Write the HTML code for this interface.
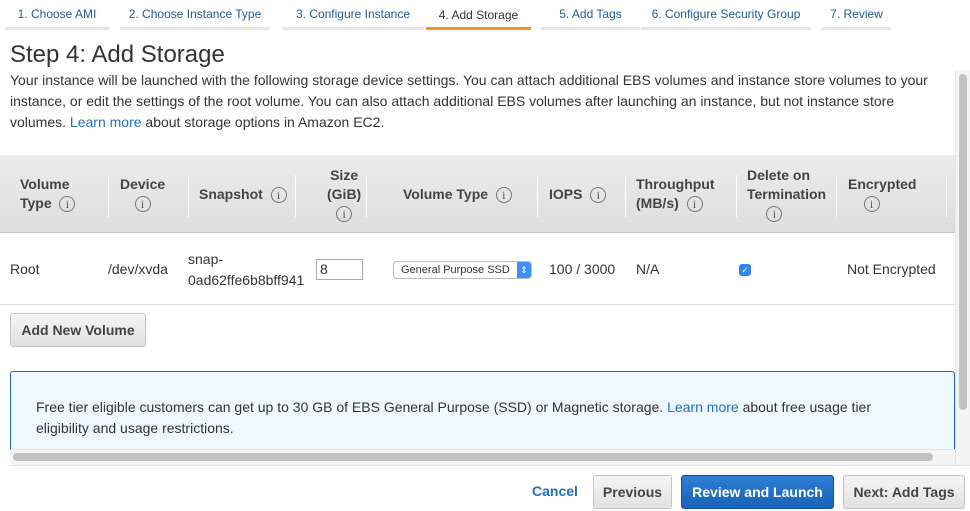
<!DOCTYPE html>
<html><head><style>
*{box-sizing:border-box;margin:0;padding:0}
body{width:970px;height:511px;overflow:hidden;background:#fff;font-family:"Liberation Sans",Arial,sans-serif;color:#333;position:relative}
.tab{position:absolute;top:0;height:30px;font-size:12px;color:#1f5b98;text-align:center;line-height:28px;border-bottom:3px solid #e5e5e5}
.tab.act{color:#333;border-bottom-color:#f7941d;line-height:30px}
h1{position:absolute;left:10px;top:41px;font-size:24px;font-weight:normal;color:#333}
.intro{position:absolute;left:10px;top:70px;width:935px;font-size:14px;line-height:21px}
a{color:#1f6fc5;text-decoration:none}
.thead{position:absolute;left:0;top:155px;width:955px;height:78px;background:linear-gradient(#ebebeb,#dedede);border-bottom:1px solid #c8c8c8}
.th{position:absolute;top:0;height:78px;display:flex;align-items:center;font-weight:bold;font-size:14px;line-height:19px;color:#444}
.th>div{white-space:nowrap}
.sep{position:absolute;top:20px;height:42px;border-left:1px solid #fff}
.i{display:inline-block;width:16px;height:16px;border:1px solid #777;border-radius:50%;font:12px/14px "Liberation Serif",serif;text-align:center;color:#555;font-weight:normal;vertical-align:middle}
.row{position:absolute;left:0;top:234px;width:955px;height:71px;border-bottom:1px solid #ddd;font-size:14px}
.td{position:absolute;top:0;height:71px;display:flex;align-items:center;line-height:21px}
.btn{position:absolute;height:34px;border:1px solid #c4c4c4;border-radius:3px;background:linear-gradient(#f5f5f5,#e1e1e1);font-weight:bold;font-size:14px;color:#444;text-align:center;line-height:32px}
</style></head><body>
<div class="tab" style="left:5px;width:104px">1. Choose AMI</div>
<div class="tab" style="left:120px;width:150px">2. Choose Instance Type</div>
<div class="tab" style="left:282px;width:142px">3. Configure Instance</div>
<div class="tab act" style="left:426px;width:105px">4. Add Storage</div>
<div class="tab" style="left:541px;width:99px">5. Add Tags</div>
<div class="tab" style="left:641px;width:170px">6. Configure Security Group</div>
<div class="tab" style="left:822px;width:69px">7. Review</div>
<h1>Step 4: Add Storage</h1>
<div class="intro">Your instance will be launched with the following storage device settings. You can attach additional EBS volumes and instance store volumes to your instance, or edit the settings of the root volume. You can also attach additional EBS volumes after launching an instance, but not instance store volumes. <a>Learn more</a> about storage options in Amazon EC2.</div>
<div class="thead">
<div class="th" style="left:20px"><div>Volume<br>Type &nbsp;<span class="i">i</span></div></div>
<div class="sep" style="left:108px"></div>
<div class="th" style="left:120px"><div style="text-align:center">Device<br><span class="i">i</span></div></div>
<div class="sep" style="left:188px"></div>
<div class="th" style="left:199px"><div>Snapshot &nbsp;<span class="i">i</span></div></div>
<div class="sep" style="left:295px"></div>
<div class="th" style="left:327px"><div style="text-align:center">Size<br>(GiB)<br><span class="i">i</span></div></div>
<div class="sep" style="left:366px"></div>
<div class="th" style="left:403px"><div>Volume Type &nbsp;<span class="i">i</span></div></div>
<div class="sep" style="left:537px"></div>
<div class="th" style="left:549px"><div>IOPS &nbsp;<span class="i">i</span></div></div>
<div class="sep" style="left:625px"></div>
<div class="th" style="left:636px"><div>Throughput<br>(MB/s) &nbsp;<span class="i">i</span></div></div>
<div class="sep" style="left:736px"></div>
<div class="th" style="left:747px"><div>Delete on<br>Termination<br>&nbsp;&nbsp;&nbsp;&nbsp;&nbsp;<span class="i">i</span></div></div>
<div class="sep" style="left:836px"></div>
<div class="th" style="left:848px"><div>Encrypted<br>&nbsp;&nbsp;&nbsp;&nbsp;<span class="i">i</span></div></div>
<div class="sep" style="left:946px"></div>
</div>
<div class="row">
<div class="td" style="left:10px">Root</div>
<div class="td" style="left:108px">/dev/xvda</div>
<div class="td" style="left:188px">snap-<br>0ad62ffe6b8bff941</div>
<div class="td" style="left:316px"><div style="width:47px;height:21px;border:1px solid #aaa;padding-left:3px;line-height:19px">8</div></div>
<div class="td" style="left:393px"><div style="width:139px;height:18px;border:1px solid #bbb;border-radius:4px;font-size:11px;line-height:16px;padding-left:7px;position:relative;overflow:hidden;white-space:nowrap">General Purpose SSD<span style="position:absolute;right:0;top:0;width:14px;height:16px;background:#3d8ff5;color:#fff;font-size:9px;text-align:center;line-height:16px">&#8661;</span></div></div>
<div class="td" style="left:549px">100 / 3000</div>
<div class="td" style="left:636px">N/A</div>
<div class="td" style="left:739px"><div style="width:12px;height:12px;border-radius:3px;background:#2f86f0;color:#fff;font-size:9px;line-height:12px;text-align:center">&#10003;</div></div>
<div class="td" style="left:847px">Not Encrypted</div>
</div>
<div class="btn" style="left:10px;top:313px;width:136px">Add New Volume</div>
<div style="position:absolute;left:10px;top:371px;width:945px;height:90px;background:#eef8fe;border:1px solid #1f67b5;border-bottom:none;border-radius:3px 3px 0 0;font-size:14px;line-height:21px;padding:25px 50px 0 25px">Free tier eligible customers can get up to 30 GB of EBS General Purpose (SSD) or Magnetic storage. <a>Learn more</a> about free usage tier eligibility and usage restrictions.</div>
<div style="position:absolute;left:10px;top:449px;width:945px;height:16px;background:#f4f4f4;border-top:1px solid #e4e4e4"></div>
<div style="position:absolute;left:13px;top:453px;width:920px;height:8px;background:#c1c1c1;border-radius:4px"></div>
<div style="position:absolute;left:955px;top:70px;width:15px;height:395px;background:#f4f4f4;border-left:1px solid #e4e4e4"></div>
<div style="position:absolute;left:959px;top:74px;width:8px;height:336px;background:#c1c1c1;border-radius:4px"></div>
<div style="position:absolute;left:10px;top:465px;width:960px;height:1px;background:#e4e4e4"></div>
<div style="position:absolute;left:532px;top:483px;font-size:14px;font-weight:bold;color:#1f6fc5">Cancel</div>
<div class="btn" style="left:593px;top:475px;width:79px">Previous</div>
<div class="btn" style="left:681px;top:475px;width:153px;background:linear-gradient(#2e7fd6,#1a62b5);border-color:#14509a;color:#fff">Review and Launch</div>
<div class="btn" style="left:843px;top:475px;width:122px">Next: Add Tags</div>
</body></html>
